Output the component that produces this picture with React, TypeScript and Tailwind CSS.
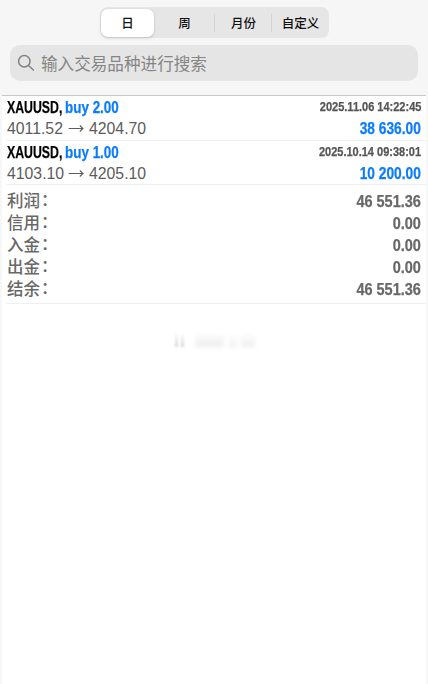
import clsx from "clsx";

const tabs = [
  { label: "日", width: "w-[53px]" },
  { label: "周", width: "w-[61px]" },
  { label: "月份", width: "w-[57px]" },
  { label: "自定义", width: "w-[57px]" },
];

const deals = [
  { symbol: "XAUUSD", side: "buy 2.00", open: "4011.52", close: "4204.70", time: "2025.11.06 14:22:45", profit: "38 636.00" },
  { symbol: "XAUUSD", side: "buy 1.00", open: "4103.10", close: "4205.10", time: "2025.10.14 09:38:01", profit: "10 200.00" },
];

const totals = [
  { label: "利润", value: "46 551.36" },
  { label: "信用", value: "0.00" },
  { label: "入金", value: "0.00" },
  { label: "出金", value: "0.00" },
  { label: "结余", value: "46 551.36" },
];

// Bold grotesque, squeezed with scale-x where it is used
const condensed = "inline-block font-['Liberation_Sans',Arial,sans-serif] font-bold whitespace-nowrap [-webkit-text-stroke:0.25px_currentColor]";

function PeriodTabs() {
  return (
    <div className="ml-px flex h-[31px] w-[229px] items-center rounded-[8px] bg-[#e6e6e6] pl-px">
      {tabs.map((tab, i) => (
        <div
          key={tab.label}
          className={clsx(
            "relative flex h-[28px] shrink-0 items-center justify-center pt-px text-[12.5px] leading-none font-medium text-[#111]",
            tab.width,
            i === 0 && "rounded-[7px] bg-white shadow-[0_1px_3px_rgba(0,0,0,0.18)]",
          )}
        >
          {tab.label}
          {(i === 1 || i === 2) && <span className="absolute top-[5px] right-0 h-[18px] w-px bg-[#d4d4d4]" />}
        </div>
      ))}
    </div>
  );
}

function SearchField() {
  return (
    <div className="mx-[10px] mt-[7px] flex h-[36px] items-center self-stretch rounded-[10px] bg-[#e5e5e5] pl-[7px]">
      <svg width="18" height="18" viewBox="0 0 18 18" fill="none" stroke="#818181" strokeWidth="1.5" strokeLinecap="round">
        <circle cx="7.3" cy="7.3" r="5.7" />
        <path d="M11.5 11.5 16.4 16" />
      </svg>
      <span className="ml-[6px] text-[16.6px] leading-none text-[#858585]">输入交易品种进行搜索</span>
    </div>
  );
}

export default function App() {
  return (
    <div className="flex h-[684px] w-[428px] flex-col bg-[#f7f7f7] font-['Noto_Sans_CJK_SC',sans-serif]">
      {/* Period and symbol filter */}
      <header className="flex h-[95px] flex-col items-center bg-[#f6f6f6] pt-[7px]">
        <PeriodTabs />
        <SearchField />
      </header>

      <main className="mr-[2px] ml-[2px] flex-1 border-t border-[#c9c9c9] bg-white">
        {/* Closed deals */}
        {deals.map((deal, i) => (
          <div key={deal.time} className={clsx("ml-[5px] border-b border-[#efefef] pt-px pr-[5px]", i === 0 && "pb-px")}>
            <div className="flex h-[21px] items-center">
              <div className="flex w-[58px]">
                <span className={clsx(condensed, "origin-left scale-x-[0.75] text-[16.4px] leading-[21px] text-black")}>{deal.symbol},</span>
              </div>
              <span className={clsx(condensed, "origin-left scale-x-[0.82] text-[16.4px] leading-[21px] text-[#0a7cff]")}>{deal.side}</span>
              <span className={clsx(condensed, "ml-auto origin-right scale-x-[0.88] text-[12.5px] leading-[21px] text-[#555]")}>{deal.time}</span>
            </div>
            <div className="flex h-[21px] items-center justify-between">
              <div className="flex items-center font-['Liberation_Sans',sans-serif] text-[15.8px] leading-[21px] text-[#5c5c5c]">
                <span className="w-[57px]">{deal.open}</span>
                <svg className="mr-[4px] ml-[4px]" width="17" height="10" viewBox="0 0 17 10" fill="none" stroke="#5c5c5c" strokeWidth="1.1">
                  <path d="M.7 4.5h14.5M11.8 1.5 15 4.5l-3.2 3" />
                </svg>
                {deal.close}
              </div>
              <span className={clsx(condensed, "origin-right scale-x-[0.84] text-[16.4px] leading-[21px] text-[#0a7cff]")}>{deal.profit}</span>
            </div>
          </div>
        ))}

        {/* Account totals */}
        <div className="ml-[5px] border-b border-[#efefef] pt-[5px] pr-[5px] pb-[3px]">
          {totals.map((row) => (
            <div key={row.label} className="flex h-[22px] items-center justify-between text-[#686868]">
              <span className="flex pb-px text-[16.5px] leading-none font-medium">
                {row.label}
                <span className="-mt-px ml-px">：</span>
              </span>
              <span className={clsx(condensed, "origin-right scale-x-[0.885] text-[16.4px] leading-[22px]")}>{row.value}</span>
            </div>
          ))}
        </div>

        {/* Faint smudge under the list */}
        <div className="mt-[28px] ml-[173px] flex h-[15px] items-end">
          <div className="h-[14px] w-[3px] bg-linear-to-b from-transparent to-[#d6d6d6] blur-[1px]" />
          <div className="ml-[3px] h-[14px] w-[3px] bg-linear-to-b from-transparent to-[#d6d6d6] blur-[1px]" />
          <div className="ml-[11px] h-[14px] w-[29px] bg-linear-to-b from-transparent to-[#ececec] blur-[2px]" />
          <div className="ml-[5px] h-[14px] w-[8px] bg-linear-to-b from-transparent to-[#f0f0f0] blur-[2px]" />
          <div className="ml-[4px] h-[14px] w-[14px] bg-linear-to-b from-transparent to-[#ededed] blur-[2px]" />
        </div>
      </main>
    </div>
  );
}
